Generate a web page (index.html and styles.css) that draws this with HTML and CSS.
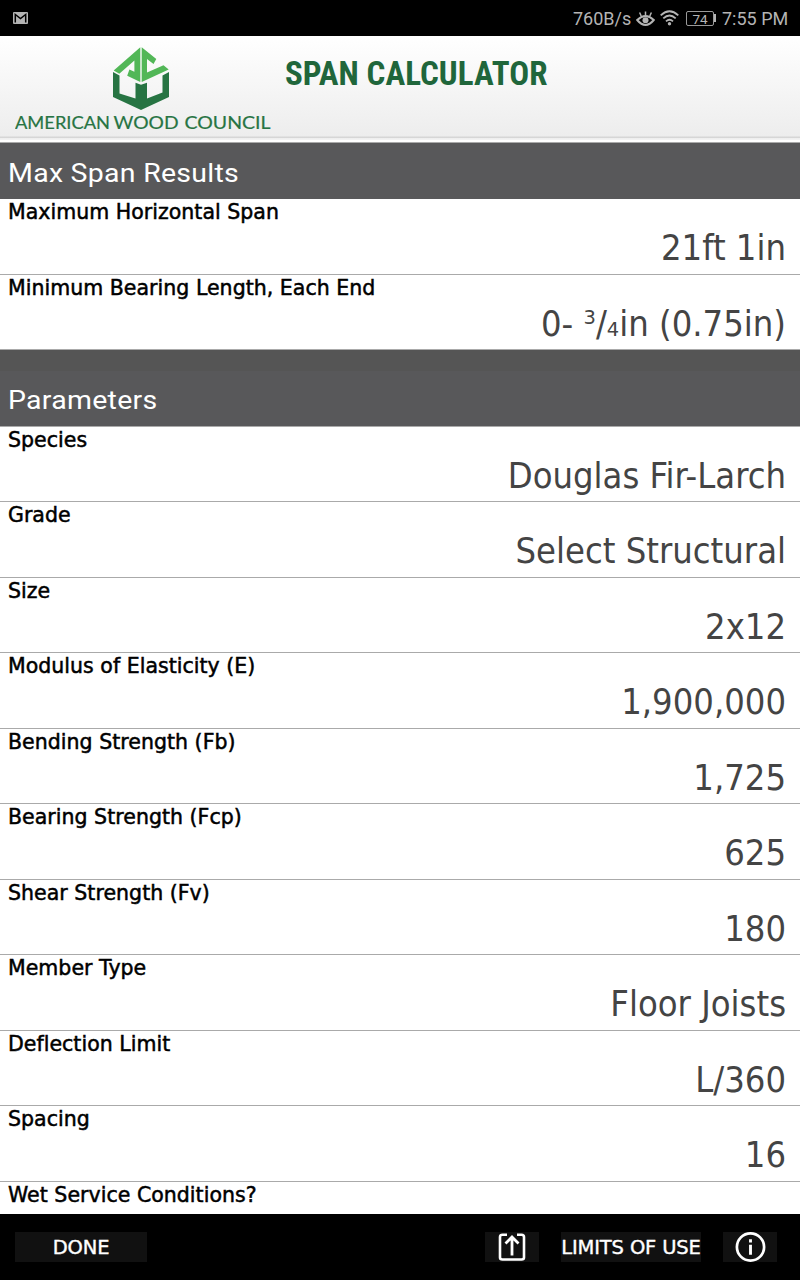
FILE: index.html
```html
<!DOCTYPE html>
<html lang="en">
<head>
    <meta charset="UTF-8">
    <meta name="viewport" content="width=device-width, initial-scale=1.0">
    <title>Span Calculator</title>
    <link rel="stylesheet" href="styles.css">
</head>
<body>
    <div class="status-bar">
        <svg class="mail-icon" width="15" height="12" viewBox="0 0 15 12">
            <rect width="15" height="12" rx="1" fill="#b4b4b4"/>
            <path d="M2.300 10.500V2.500l5.200 4 5.200-4v8" fill="none" stroke="#000" stroke-width="1.500"/>
        </svg>
        <div class="status-right">
            <span class="status-text speed">760B/s</span>
            <svg class="eye-icon" width="19" height="17" viewBox="0 0 19 17" fill="none" stroke="#b4b4b4">
                <path d="M1.200 10Q9.500 2 17.800 10Q9.500 20 1.200 10Z" stroke-width="2"/>
                <circle cx="9.500" cy="10.300" r="3" fill="#b4b4b4" stroke="none"/>
                <path d="M9.500 1.500v4M3.600 2.500l1.600 3.500M15.400 2.500l-1.600 3.500" stroke-width="1.500"/>
            </svg>
            <svg class="wifi-icon" width="19" height="16" viewBox="0 0 19 16" fill="none" stroke="#b4b4b4" stroke-width="1.800">
                <path d="M.7 5.300Q9.500-2.700 18.300 5.300M3.300 8.400Q9.500 2.700 15.700 8.400M6 11.300Q9.500 8.200 13 11.300"/>
                <circle cx="9.500" cy="13.800" r="1.700" fill="#b4b4b4" stroke="none"/>
            </svg>
            <span class="battery">74</span>
            <span class="battery-tip"></span>
            <span class="status-text clock">7:55 PM</span>
        </div>
    </div>

    <header class="header">
        <svg class="logo" width="256" height="88" viewBox="0 0 256 88">
            <!-- roof -->
            <g fill="#52b757">
                <path d="M125.300 2.200V37L112.200 30.800l2.200-6.300 5 2.200V15.500L104.300 28.800l-5.600-3.300Z"/>
                <path d="M126.700 2.200L141.300 14l-2.800 5-6.500-5V27.500l16.500-7.200 5.200 4.200L126.700 37Z"/>
            </g>
            <!-- walls -->
            <path fill="#277443" d="M98 27l6.500 3.500V48.500L120.500 53.500V37.800l5.500 2 6-2V53.500l15.500-6V30.500l6.500-3.500V52L126 65 98 52Z"/>
            <g class="logo-text">
                <text x="0" y="84" textLength="95" lengthAdjust="spacingAndGlyphs">AMERICAN</text>
                <text x="98.500" y="84" textLength="65" lengthAdjust="spacingAndGlyphs">WOOD</text>
                <text x="169.500" y="84" textLength="86" lengthAdjust="spacingAndGlyphs">COUNCIL</text>
            </g>
        </svg>
        <h1 class="title">SPAN CALCULATOR</h1>
    </header>

    <main class="content">
        <h2 class="section-title"><span>Max Span Results</span></h2>
        <div class="row">
            <div class="label">Maximum Horizontal Span</div>
            <div class="value">21ft 1in</div>
        </div>
        <div class="row">
            <div class="label">Minimum Bearing Length, Each End</div>
            <div class="value">0- <span class="num">3</span>/<span class="den">4</span>in (0.75in)</div>
        </div>

        <div class="divider"></div>
        <h2 class="section-title params"><span>Parameters</span></h2>
        <div class="row">
            <div class="label">Species</div>
            <div class="value">Douglas Fir-Larch</div>
        </div>
        <div class="row">
            <div class="label">Grade</div>
            <div class="value">Select Structural</div>
        </div>
        <div class="row">
            <div class="label">Size</div>
            <div class="value">2x12</div>
        </div>
        <div class="row">
            <div class="label">Modulus of Elasticity (E)</div>
            <div class="value">1,900,000</div>
        </div>
        <div class="row">
            <div class="label">Bending Strength (Fb)</div>
            <div class="value">1,725</div>
        </div>
        <div class="row">
            <div class="label">Bearing Strength (Fcp)</div>
            <div class="value">625</div>
        </div>
        <div class="row">
            <div class="label">Shear Strength (Fv)</div>
            <div class="value">180</div>
        </div>
        <div class="row">
            <div class="label">Member Type</div>
            <div class="value">Floor Joists</div>
        </div>
        <div class="row">
            <div class="label">Deflection Limit</div>
            <div class="value">L/360</div>
        </div>
        <div class="row">
            <div class="label">Spacing</div>
            <div class="value">16</div>
        </div>
        <div class="row">
            <div class="label">Wet Service Conditions?</div>
        </div>
    </main>

    <footer class="toolbar">
        <button class="btn done">DONE</button>
        <button class="btn share">
            <svg width="28" height="30" viewBox="0 0 28 30" fill="none" stroke="#fff">
                <path d="M9 2.800H4.500Q2 2.800 2 5v20.500Q2 27.500 4.500 27.500h19Q26 27.500 26 25.500V5Q26 2.800 23.500 2.800H19" stroke-width="2.600"/>
                <path d="M14 23.500V5M7.500 11.500L14 5l6.500 6.500" stroke-width="2.800"/>
            </svg>
        </button>
        <button class="btn limits">LIMITS OF USE</button>
        <button class="btn info">
            <svg width="31" height="30" viewBox="0 0 31 30" fill="none" stroke="#fff">
                <circle cx="15.500" cy="15" r="13.600" stroke-width="2.700"/>
                <path d="M15.500 7.200v3.300M15.500 12.800v10" stroke-width="2.900"/>
            </svg>
        </button>
    </footer>
</body>
</html>
```
FILE: styles.css
```css
* {
    box-sizing: border-box;
}

body {
    display: flex;
    flex-direction: column;
    width: 800px;
    height: 1280px;
    margin: 0;
    overflow: hidden;
    background-color: #fff;
    font-family: "DejaVu Sans Condensed", "DejaVu Sans", sans-serif;
}

.status-bar {
    display: flex;
    flex: none;
    align-items: center;
    justify-content: space-between;
    height: 36px;
    padding: 0 12px 0 13px;
    background-color: #000;
    color: #b4b4b4;
    font-family: Roboto, sans-serif;
    font-size: 18px;
}

.status-right {
    display: flex;
    align-items: center;
}

.status-text {
    line-height: 36px;
    padding-top: 2px;
    white-space: nowrap;
}

.speed {
    width: 63px;
}

.wifi-icon {
    margin: 0 7px 0 5px;
}

.battery {
    width: 28px;
    height: 15px;
    border: 1px solid #999;
    border-radius: 2px;
    font-size: 13.5px;
    line-height: 14px;
    text-align: center;
}

.battery-tip {
    width: 2px;
    height: 8px;
    margin: 0 6px 0 0;
    background-color: #b4b4b4;
}

.clock {
    width: 66px;
}

.header {
    display: flex;
    flex: none;
    height: 106px;
    padding: 9px 15px;
    background: linear-gradient(#fff 0, #ededed 100px, #d6d6d6 101px, #d6d6d6 102px, #ededed 102px, #f4f4f4 104px, #fff 104px);
}

.logo {
    flex: none;
}

.logo-text {
    font-family: Lato, sans-serif;
    font-size: 18px;
    fill: #277443;
    stroke: #277443;
    stroke-width: 0.2px;
}

.title {
    margin: 8.5px 0 0 14px;
    color: #20663b;
    font-family: Roboto, sans-serif;
    font-size: 33px;
    font-weight: 700;
    font-stretch: 75%;
    line-height: 40px;
    letter-spacing: 0.06px;
    white-space: nowrap;
}

.content {
    flex: 1;
    min-height: 0;
    overflow: hidden;
}

.section-title {
    height: 57px;
    margin: 0;
    padding: 3px 8px 0;
    border-top: 1px solid #aaa;
    background-color: #58585a;
    color: #fff;
    font-family: Roboto, sans-serif;
    font-size: 26px;
    font-weight: 400;
    line-height: 54px;
    letter-spacing: 0.25px;
}

.section-title span {
    display: inline-block;
    transform: scaleX(1.095);
    transform-origin: left;
}

.divider {
    height: 20.5px;
    background-color: #555;
}

.params {
    height: 56px;
    padding-top: 2.5px;
    border-top: 0;
    border-bottom: 1px solid #aaa;
}

.row {
    height: 75.5px;
    padding: 0 14px 0 8px;
    border-bottom: 1px solid #aaa;
}

.label {
    height: 26px;
    color: #000;
    font-family: "DejaVu Sans", sans-serif;
    font-size: 20.5px;
    line-height: 26px;
    letter-spacing: 0.03px;
    -webkit-text-stroke: 0.5px #000;
}

.value {
    color: #444;
    font-size: 36px;
    line-height: 46px;
    text-align: right;
}

.num,
.den {
    font-family: "DejaVu Sans", sans-serif;
    font-size: 19.5px;
}

.num {
    position: relative;
    top: -12px;
}

.toolbar {
    display: flex;
    flex: none;
    height: 66px;
    padding: 18px 23px 0 15px;
    background-color: #000;
}

.btn {
    display: flex;
    align-items: center;
    justify-content: center;
    height: 30px;
    padding: 0;
    border: 0;
    background-color: #111;
    color: #fff;
    font-family: "DejaVu Sans", sans-serif;
    font-size: 19.5px;
    letter-spacing: -0.15px;
    white-space: nowrap;
    -webkit-text-stroke: 0.4px #fff;
}

.done {
    width: 132px;
}

.share {
    width: 54px;
    margin-left: auto;
}

.limits {
    width: 140px;
    margin: 0 22px;
}

.info {
    width: 54px;
}
```
